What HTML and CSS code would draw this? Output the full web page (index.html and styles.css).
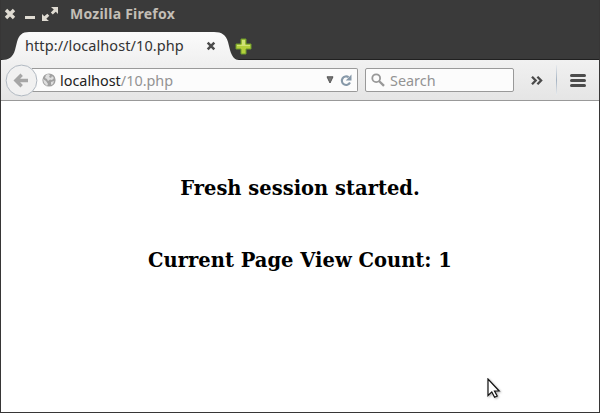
FILE: index.html
```html
<!DOCTYPE html>
<html lang="en">
<head>
<meta charset="utf-8">
<title>Mozilla Firefox</title>
<link rel="stylesheet" href="styles.css">
</head>
<body>
<div class="window">
  <header class="titlebar">
    <svg class="controls" width="66" height="31" viewBox="0 0 66 31">
      <path d="M6 10l8 8M14 10l-8 8" stroke="#dfdbd2" stroke-width="3.4"/>
      <path d="M25 17.5h10" stroke="#dfdbd2" stroke-width="3"/>
      <path d="M51 7h7v7l-2.2-2.2-3 2.8-2-2 3-3zM42 21v-7l2.3 2.2 3-2.5 2 2-3 3L49 21z" fill="#dfdbd2"/>
    </svg>
    <span class="title">Mozilla Firefox</span>
  </header>
  <div class="tabs">
    <svg class="tab-shape" width="238" height="29" viewBox="0 0 238 29">
      <defs><linearGradient id="tab" x2="0" y2="1"><stop stop-color="#fbfbfb"/><stop offset="1" stop-color="#f1f1f1"/></linearGradient></defs>
      <path d="M0 29V28C8 28 12 25 14 18L16 10C18 3 21 0 28 0H213C221 0 225 3 227 10L229 18C231 25 234 28 238 28V29z" fill="url(#tab)"/>
    </svg>
    <span class="tab-label">http://localhost/10.php</span>
    <svg class="tab-close" width="10" height="10" viewBox="0 0 10 10"><path d="M1.7 1.7l6.6 6.6M8.3 1.7l-6.6 6.6" stroke="#4b4b4b" stroke-width="2.5"/></svg>
    <svg class="tab-add" width="17" height="17" viewBox="0 0 17 17"><path d="M6 1h5v5h5v5h-5v5H6v-5H1V6h5z" fill="#b4d03c" stroke="#6d9a2c"/><path d="M7 2h3v5h5v1H7zM2 7h5v1H2z" fill="#d0e377"/></svg>
  </div>
  <nav class="toolbar">
    <svg class="back" width="33" height="33" viewBox="0 0 33 33"><circle cx="16.5" cy="16.5" r="15.4" fill="#f1f1f1" stroke="#b1b9c2"/><path d="M23 16.5H12M16.7 10.7l-5.8 5.8 5.8 5.8" fill="none" stroke="#a6a6a6" stroke-width="3.4"/></svg>
    <div class="address">
      <svg class="globe" width="14" height="14" viewBox="0 0 14 14"><circle cx="7" cy="7" r="6.6" fill="#a0a0a0"/><path d="M6 1l2 1-1 2 2 1 1-2 2 2-2 2-2-.5L6 8 5 6 3 5l1-3zM1 6l3 2 2 3-1 2-3-3zM9 9l3-1-1 3-2 1z" fill="#dedede"/></svg>
      <span class="url">localhost<span class="path">/10.php</span></span>
      <svg class="drop" width="8" height="8" viewBox="0 0 8 8"><path d="M1 .8h6L4 7z" fill="#777" stroke="#555"/></svg>
      <svg class="reload" width="12" height="13" viewBox="0 0 12 13"><path d="M8.6 3.1A4.3 4.3 0 1 0 10 8.6" fill="none" stroke="#8799a9" stroke-width="2.1"/><path d="M11.5.5v6H5.8z" fill="#8799a9"/></svg>
    </div>
    <div class="search">
      <svg width="14" height="14" viewBox="0 0 14 14"><circle cx="5.2" cy="5.2" r="3.9" fill="none" stroke="#989898" stroke-width="1.8"/><path d="M8 8l5 4.8" stroke="#989898" stroke-width="2.3"/></svg>
      <span class="placeholder">Search</span>
    </div>
    <svg class="more" width="12" height="9" viewBox="0 0 12 9"><path d="M1 .8l3.7 3.7L1 8.2M6.4.8l3.7 3.7-3.7 3.7" fill="none" stroke="#4a4a4a" stroke-width="2.3"/></svg>
    <span class="divider"></span>
    <svg class="menu" width="16" height="13" viewBox="0 0 16 13"><path d="M1.5 1.5h13M1.5 6.5h13M1.5 11.5h13" stroke="#4c4c4c" stroke-width="3" stroke-linecap="round"/></svg>
  </nav>
  <main class="page">
    <h3 class="line first">Fresh session started.</h3>
    <h3 class="line second">Current Page View Count: 1</h3>
  </main>
  <svg class="cursor" width="14" height="22" viewBox="0 0 14 22"><path d="M1 1v16.5l3.8-3.6 2.8 5.3 2.6-1.2-2.7-5h4.7z" fill="#fff" stroke="#111" stroke-width="1.2"/></svg>
</div>
</body>
</html>
```
FILE: styles.css
```css
* { box-sizing: border-box; }
body { margin: 0; font-family: "Noto Sans", sans-serif; }
svg { display: block; flex: none; }
.window { position: relative; width: 600px; height: 413px; background: #fff; border: 1px solid #373636; border-top: 0; overflow: hidden; }
.titlebar { height: 32px; margin-left: -1px; display: flex; background: #3a3a3a; }
.title { margin-left: 4px; font-size: 14px; font-weight: 700; line-height: 28px; color: #c3beb6; white-space: nowrap; letter-spacing: .24px; }
.tabs { position: relative; height: 28px; display: flex; background: #3a3a3a; border-bottom: 1px solid #202020; }
.tab-shape { position: absolute; left: 0; top: 0; }
.tab-label { position: relative; width: 181px; padding-left: 24px; font-size: 14.5px; line-height: 27px; letter-spacing: .08px; color: #333; white-space: nowrap; }
.tab-close { position: relative; margin: 9px 0 0 24px; }
.tab-add { margin: 6px 0 0 19px; }
.toolbar { height: 41px; padding-left: 4px; display: flex; align-items: center; background: linear-gradient(#f1f1f1, #e5e5e5); border-bottom: 1px solid #999; }
.back { position: relative; }
.address { width: 326px; height: 24px; margin-left: -6px; padding: 0 5px 0 10px; display: flex; align-items: center; background: #fcfcfc; border: 1px solid #999; border-left: 0; border-radius: 0 2px 2px 0; }
.url { flex: 1; margin-left: 4px; font-size: 14.4px; line-height: 23px; color: #222; white-space: nowrap; }
.path, .placeholder { color: #939393; }
.reload { margin-left: 6px; }
.search { width: 149px; height: 24px; margin-left: 7px; padding-left: 5px; display: flex; align-items: center; background: #fcfcfc; border: 1px solid #999; border-radius: 2px; }
.placeholder { margin-left: 5px; font-size: 14.4px; line-height: 22px; padding-top: 1px; }
.more { margin-left: 17px; }
.divider { width: 1px; height: 30px; margin-left: 13px; background: linear-gradient(#e8ebee, #a5b3c2, #e8ebee); }
.menu { margin-left: 13px; }
.page { height: 311px; padding-top: 76px; text-align: center; }
.line { margin: 0; font: 700 19.5px/24px "DejaVu Serif", serif; color: #000; white-space: nowrap; }
.second { margin-top: 48px; }
.cursor { position: absolute; left: 486px; top: 378px; filter: drop-shadow(1px 1px 1px #0005); }
```
